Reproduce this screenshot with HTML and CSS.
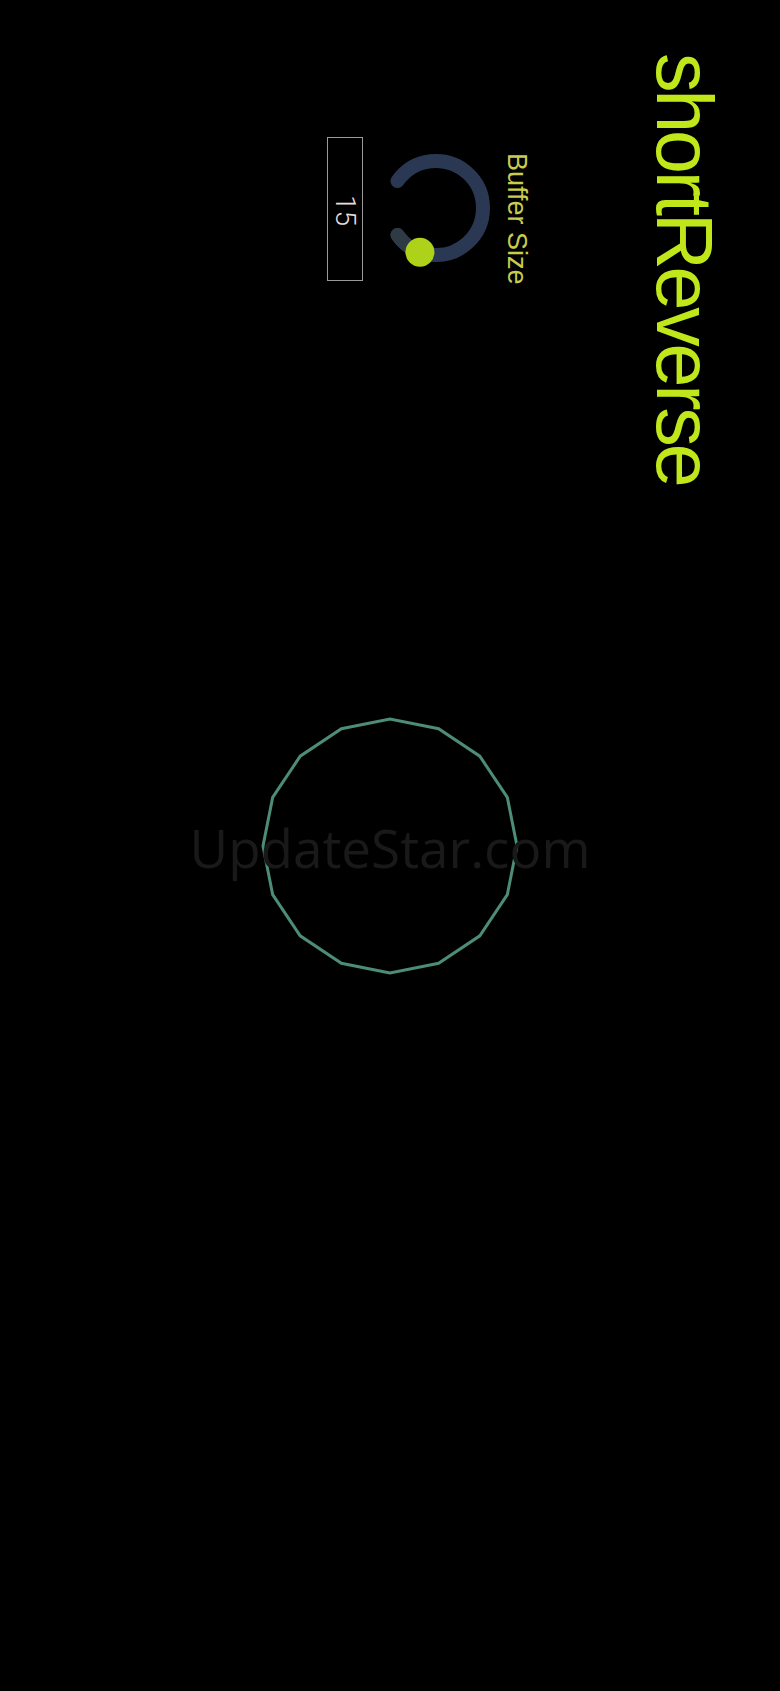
FILE: index.html
```html
<!DOCTYPE html>
<html lang="en">
<head>
<meta charset="utf-8">
<title>shortReverse</title>
<link rel="stylesheet" href="styles.css">
</head>
<body>
<div class="screen">
  <div class="stage">
    <div class="panel">
      <h1 class="title">shortReverse</h1>
      <div class="control">
        <div class="control-label">Buffer Size</div>
        <svg class="knob" width="142" height="112" viewBox="0 0 142 112">
          <path class="knob-track" d="M 44.04 94.50 A 47 47 0 1 1 97.96 94.50"/>
          <path class="knob-value" d="M 97.96 94.50 A 47 47 0 0 0 115.17 72.07"/>
          <circle class="knob-dot" cx="115.17" cy="72.07" r="14.5"/>
        </svg>
        <div class="number-box">15</div>
      </div>
    </div>
    <svg class="shape" width="260" height="260" viewBox="0 0 260 260">
      <polygon points="257,130 247.33,178.60 219.80,219.80 178.60,247.33 130,257 81.40,247.33 40.20,219.80 12.67,178.60 3,130 12.67,81.40 40.20,40.20 81.40,12.67 130,3 178.60,12.67 219.80,40.20 247.33,81.40"/>
    </svg>
  </div>
  <div class="watermark">UpdateStar.com</div>
</div>
</body>
</html>
```
FILE: styles.css
```css
html, body {
  margin: 0;
  padding: 0;
  background: #000;
}

.screen {
  position: relative;
  width: 780px;
  height: 1691px;
  overflow: hidden;
  background: #000;
}

.stage {
  width: 1691px;
  height: 780px;
  transform-origin: 0 0;
  transform: translate(780px, 0) rotate(90deg);
  display: grid;
}

.panel {
  grid-area: 1 / 1;
  display: flex;
  flex-direction: column;
  align-items: flex-start;
}

.title {
  margin: 0;
  padding: 56px 0 0 53px;
  font-family: "Liberation Sans", Arial, sans-serif;
  font-weight: 400;
  font-size: 79px;
  line-height: 79px;
  letter-spacing: -3.2px;
  color: #bfe719;
}

.control {
  margin: 115px 0 0 137px;
  display: flex;
  flex-direction: column;
  align-items: flex-start;
}

.control-label {
  padding-left: 16px;
  font-family: "Liberation Sans", Arial, sans-serif;
  font-size: 27px;
  line-height: 27px;
  color: #c9cc4c;
}

.knob {
  display: block;
  margin-top: 11px;
}

.knob-track {
  fill: none;
  stroke: #2a3853;
  stroke-width: 14;
  stroke-linecap: round;
}

.knob-value {
  fill: none;
  stroke: #2e3b44;
  stroke-width: 14;
  stroke-linecap: round;
}

.knob-dot {
  fill: #aed11a;
}

.number-box {
  box-sizing: border-box;
  margin-top: 17px;
  width: 144px;
  height: 36px;
  border: 1.5px solid #9a9a9a;
  display: flex;
  align-items: center;
  justify-content: center;
  padding-left: 3px;
  font-family: Roboto, "Liberation Sans", sans-serif;
  font-weight: 300;
  font-size: 28px;
  line-height: 1;
  color: #e8dddd;
}

.shape {
  grid-area: 1 / 1;
  place-self: center;
  display: block;
}

.shape polygon {
  fill: none;
  stroke: #4c8c79;
  stroke-width: 3;
  stroke-linejoin: miter;
}

.watermark {
  position: absolute;
  left: 0;
  right: 0;
  top: 821px;
  text-align: center;
  font-family: "Open Sans", sans-serif;
  font-size: 53px;
  line-height: 53px;
  color: #191919;
  pointer-events: none;
}
```
